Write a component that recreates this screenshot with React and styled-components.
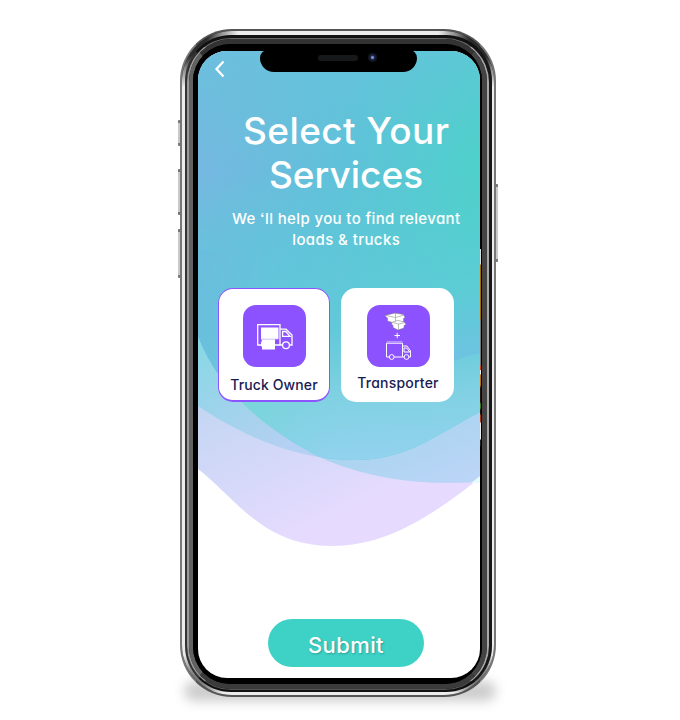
import React from "react";
import styled, { createGlobalStyle } from "styled-components";

const GlobalStyle = createGlobalStyle`
  * { box-sizing: border-box; }
  body { margin: 0; background: #fff; }
`;

const Stage = styled.main`
  width: 680px;
  height: 720px;
  padding: 29px 0 0 180px;
  overflow: hidden;
  background: #fff;
  font-family: "Inter", "Liberation Sans", sans-serif;
  font-feature-settings: "cv11" 1, "ss03" 1;
`;

const Phone = styled.div`
  position: relative;
  width: 316px;
  height: 668px;
`;

const GroundShadow = styled.div`
  position: absolute;
  left: 4px;
  right: 0;
  bottom: -4px;
  height: 20px;
  border-radius: 10px;
  background: rgba(0, 0, 0, 0.2);
  filter: blur(6px);
`;

const SideKey = styled.i`
  position: absolute;
  left: ${(p) => (p.$right ? "314px" : "-2px")};
  top: ${(p) => p.$top}px;
  width: 4px;
  height: ${(p) => p.$height}px;
  background: #c9c9c9;
  border: solid #777;
  border-width: 3px 0;
  border-radius: 1px;
`;

const Ring = styled.div`
  height: 100%;
  border-style: solid;
  border-width: ${(p) => p.$widths};
  border-color: ${(p) => p.$colors};
  border-radius: ${(p) => p.$radius}px;
  background: ${(p) => p.$fill || "#111"};
`;

const Case = styled(Ring)`
  position: relative;
`;

const MetalRing = styled(Ring)`
  border-color: transparent;
  background:
    radial-gradient(circle at 0 0, #2b2b2b 26px, #8a8a8a 38px, transparent 56px) border-box,
    radial-gradient(circle at 100% 0, #2b2b2b 26px, #8a8a8a 38px, transparent 56px) border-box,
    radial-gradient(circle at 0 100%, #777 22px, transparent 40px) border-box,
    radial-gradient(circle at 100% 100%, #777 22px, transparent 40px) border-box,
    #ececec border-box;
`;

const Screen = styled.section`
  position: relative;
  height: 100%;
  display: flex;
  flex-direction: column;
  align-items: center;
  overflow: hidden;
  border-radius: 29px;
  background: #fff;
`;

const Waves = styled.svg`
  position: absolute;
  inset: 0;
  width: 282px;
  height: 627px;
`;

const Notch = styled.div`
  position: absolute;
  top: -1px;
  left: 62px;
  width: 157px;
  height: 22px;
  border-radius: 8px 8px 14px 14px;
  background: #000;
  display: flex;
  align-items: flex-start;
  padding: 5px 0 0 58px;
  gap: 10px;
`;

const Speaker = styled.span`
  width: 40px;
  height: 6px;
  border-radius: 3px;
  background: #171819;
`;

const Camera = styled.span`
  width: 9px;
  height: 9px;
  margin-top: -2px;
  border-radius: 50%;
  background: radial-gradient(circle, #8f9bd0 0 0.8px, #202a5a 2px, #10131d 3.5px, #191b20 4.5px);
`;

const BackButton = styled.button`
  position: relative;
  align-self: flex-start;
  width: 14px;
  height: 20px;
  margin: 8px 0 0 15px;
  padding: 0;
  border: 0;
  background: none;
  svg { display: block; }
`;

const Title = styled.h1`
  position: relative;
  margin: 30px 0 0 14px;
  display: flex;
  flex-direction: column;
  align-items: center;
  color: #fff;
  font-size: 37px;
  font-weight: 500;
  line-height: 44px;
`;

const Subtitle = styled.p`
  position: relative;
  margin: 11px 0 0 14px;
  display: flex;
  flex-direction: column;
  align-items: center;
  color: #fff;
  font-size: 15px;
  font-weight: 500;
  line-height: 21px;
`;

const Line = styled.span`
  white-space: nowrap;
  letter-spacing: ${(p) => p.$spacing}px;
  margin-right: ${(p) => -p.$spacing}px;
`;

const Options = styled.div`
  position: relative;
  align-self: flex-start;
  display: flex;
  gap: 11px;
  margin: 38px 0 0 20px;
`;

const OptionCard = styled.button`
  width: ${(p) => (p.$selected ? 112 : 113)}px;
  height: 114px;
  padding: ${(p) => (p.$selected ? "16px 0 0" : "17px 0 0 1px")};
  display: flex;
  flex-direction: column;
  align-items: center;
  border: solid #8c54ff;
  border-width: ${(p) => (p.$selected ? "1px 1px 2px" : 0)};
  border-radius: 15px;
  background: #fff;
  font: inherit;
`;

const IconTile = styled.span`
  width: 63px;
  height: 62px;
  border-radius: 13px;
  background: #8c52ff;
  svg { display: block; }
`;

const OptionLabel = styled.span`
  margin-top: ${(p) => p.$gap}px;
  color: #182052;
  font-size: 14px;
  font-weight: 500;
  line-height: 18px;
  white-space: nowrap;
  letter-spacing: ${(p) => p.$spacing}px;
`;

const SubmitButton = styled.button`
  position: relative;
  width: 156px;
  height: 48px;
  margin: auto 0 11px 14px;
  padding: 4px 0 0;
  border: 0;
  border-radius: 24px;
  background: #3dd2c5;
  color: #fff;
  font: inherit;
  font-size: 22px;
  font-weight: 500;
  line-height: 44px;
  letter-spacing: 0.4px;
  text-shadow: 1px 1px 2px rgba(0, 70, 80, 0.35);
`;

function Backdrop() {
  return (
    <Waves viewBox="198 51 282 627" aria-hidden="true">
      <defs>
        <linearGradient id="top" gradientUnits="userSpaceOnUse" x1="205" y1="125" x2="480" y2="190">
          <stop stopColor="#76b7e1" />
          <stop offset=".5" stopColor="#60c1da" />
          <stop offset="1" stopColor="#4dd1ca" />
        </linearGradient>
        <linearGradient id="down" gradientUnits="userSpaceOnUse" x1="320" y1="51" x2="340" y2="460">
          <stop stopColor="#66c4dc" stopOpacity=".6" />
          <stop offset=".28" stopColor="#5dcbd4" stopOpacity="0" />
          <stop offset=".5" stopColor="#60cad9" stopOpacity=".5" />
          <stop offset=".68" stopColor="#64c9da" stopOpacity=".85" />
          <stop offset=".84" stopColor="#7fd1e2" />
          <stop offset="1" stopColor="#92d2ee" />
        </linearGradient>
        <linearGradient id="lilac" gradientUnits="userSpaceOnUse" x1="225" y1="400" x2="290" y2="540">
          <stop stopColor="#c4d6f3" />
          <stop offset="1" stopColor="#e6dbff" />
        </linearGradient>
        <linearGradient id="ice" gradientUnits="userSpaceOnUse" x1="198" y1="350" x2="270" y2="455">
          <stop stopColor="#8ad7e5" />
          <stop offset="1" stopColor="#b4d0f2" />
        </linearGradient>
        <linearGradient id="right" gradientUnits="userSpaceOnUse" x1="420" y1="400" x2="455" y2="485">
          <stop stopColor="#a6d4ef" />
          <stop offset="1" stopColor="#bbd5f7" />
        </linearGradient>
        <linearGradient id="glow" gradientUnits="userSpaceOnUse" x1="240" y1="400" x2="335" y2="425">
          <stop stopColor="#76d8d6" stopOpacity=".8" />
          <stop offset="1" stopColor="#7dd3df" stopOpacity="0" />
        </linearGradient>
        <linearGradient id="rim" x1="0" y1="0" x2="0" y2="1">
          <stop stopColor="#60c7da" stopOpacity="0" />
          <stop offset="1" stopColor="#6fc1e4" />
        </linearGradient>
        <linearGradient id="leftRim" gradientUnits="userSpaceOnUse" x1="198" y1="0" x2="270" y2="0">
          <stop stopColor="#6abddd" stopOpacity=".8" />
          <stop offset="1" stopColor="#6abddd" stopOpacity="0" />
        </linearGradient>
        <clipPath id="sweep">
          <path d="M198 51H480V482Q400 488 328 461Q227 412 198 336Z" />
        </clipPath>
      </defs>
      <path fill="url(#lilac)" d="M198 300H480V478C436 512 390 546 332 546C262 546 235 497 198 469Z" />
      <path fill="url(#ice)" d="M198 300H480V412C435 435 408 460 354 460C293 460 238 433 198 406Z" />
      <path fill="url(#right)" d="M198 300H480V482Q395 488 328 461Q227 412 198 336Z" />
      <g clipPath="url(#sweep)">
        <path fill="url(#top)" d="M198 51H480V412C435 435 408 460 354 460C293 460 238 433 198 406Z" />
        <path fill="url(#down)" d="M198 51H480V412C435 435 408 460 354 460C293 460 238 433 198 406Z" />
        <path fill="url(#leftRim)" d="M198 250H270V386H198Z" />
        <path fill="url(#glow)" d="M220 390H335V459Q280 452 220 420Z" />
        <path fill="url(#rim)" d="M445 289H480V353Q462 357 445 365Z" />
      </g>
      <path fill="#e7fbff" d="M480 476L471 483H480Z" />
    </Waves>
  );
}

const EdgeStrip = styled.i`
  position: absolute;
  left: 298px;
  top: 151px;
  width: 1px;
  height: 264px;
  background: linear-gradient(#000 0 67px, #ddd 67px 82px, #a56a00 83px 137px, #777 138px 183px, #d8450e 184px 188px, #eee 188px 192px, #c06d13 193px 203px, #2c160b 206px 220px, #3e7d13 222px 226px, #20150b 228px 232px, #b23b0b 233px 240px, #eee 241px 257px, #222 258px);
`;

function TruckOwnerIcon() {
  return (
    <svg width="63" height="62" fill="none" stroke="#fff" strokeWidth="1.3">
      <path d="M19 40H14.7V19.7H37V40H29M37 24.2H43L49 30V40H47M40 40H37M39.6 26.5V31.3H47L42.8 26.5Z" />
      <path fill="#fff" stroke="none" d="M18 22.5H35.5V34H32V44.5H19V41.5H18V38L19 35L18 34Z" />
      <path stroke="#bda0ff" strokeWidth=".7" d="M18.5 34.2H35" />
      <circle cx="43" cy="40.3" r="3.4" />
    </svg>
  );
}

function TransporterIcon() {
  return (
    <svg width="63" height="62" fill="none" stroke="#fff" strokeWidth="1">
      <g fill="#fff" stroke="#777" strokeWidth=".5">
        <path d="M18 10.5L28 8L36.5 9.5L38 12.5L36.5 13.5V17L28.5 18.5L20.5 16V13L18 11Z" />
        <path d="M19 10.5L28.5 12.5L37 10M28.5 12.5V18M28.5 8V12" />
        <path d="M25.5 17L31 15.5L37.5 17L39 19.5L37 20.5V23L31 25L26 22.5V20.5L24.5 19Z" />
        <path d="M26 17.5L31.5 19L38 17.5M31.5 19V24.5" />
      </g>
      <path d="M30.2 27.8V33.2M27.5 30.5H33" />
      <path opacity=".35" strokeWidth="1.4" d="M19.5 36.6H35.5" />
      <path d="M22 52H19.5V38.2H35.5V52H27M35.5 41H40L43.5 46V52H42M35.5 52H37M37 43V47H42.7L39.7 43Z" />
      <circle cx="24.7" cy="52" r="2.4" />
      <circle cx="39.5" cy="52" r="2.4" />
    </svg>
  );
}

export default function App() {
  return (
    <Stage>
      <GlobalStyle />
      <Phone>
        <GroundShadow />
        <SideKey $top={91} $height={26} />
        <SideKey $top={140} $height={46} />
        <SideKey $top={200} $height={49} />
        <SideKey $right $top={155} $height={78} />
        <Case $widths="2px" $colors="#555 #777 #555 #777" $radius={52}>
          <MetalRing $widths="4px 2px 3px 3px" $radius={50}>
            <Ring $widths="3px 3px 2px 2px" $colors="#111 #181818 #111 #333" $radius={46}>
              <Ring $widths="1px 2px 1px 2px" $colors="#666 #a8a8a8 #555 #999" $radius={44}>
                <Ring $widths="5px 5px 5px 4px" $colors="#333 #444 #3b3b3b #626262" $radius={42}>
                  <Ring $widths="7px 2px 6px 5px" $colors="#000" $radius={37} $fill="#000">
                    <Screen>
                      <Backdrop />
                      <Notch><Speaker /><Camera /></Notch>
                      <BackButton aria-label="Back">
                        <svg width="14" height="20" fill="none" stroke="#fff" strokeWidth="2.3">
                          <path d="M10.5 2.5L3.5 10L10.5 17.5" />
                        </svg>
                      </BackButton>
                      <Title>
                        <Line $spacing={0.4}>Select Your</Line>
                        <Line $spacing={0}>Services</Line>
                      </Title>
                      <Subtitle>
                        <Line $spacing={0.37}>We ‘ll help you to find relevant</Line>
                        <Line $spacing={0.4}>loads &amp; trucks</Line>
                      </Subtitle>
                      <Options>
                        <OptionCard $selected>
                          <IconTile><TruckOwnerIcon /></IconTile>
                          <OptionLabel $gap={9} $spacing={0.1}>Truck Owner</OptionLabel>
                        </OptionCard>
                        <OptionCard>
                          <IconTile><TransporterIcon /></IconTile>
                          <OptionLabel $gap={7} $spacing={0.2}>Transporter</OptionLabel>
                        </OptionCard>
                      </Options>
                      <SubmitButton>Submit</SubmitButton>
                    </Screen>
                  </Ring>
                </Ring>
              </Ring>
            </Ring>
          </MetalRing>
          <EdgeStrip />
        </Case>
      </Phone>
    </Stage>
  );
}
